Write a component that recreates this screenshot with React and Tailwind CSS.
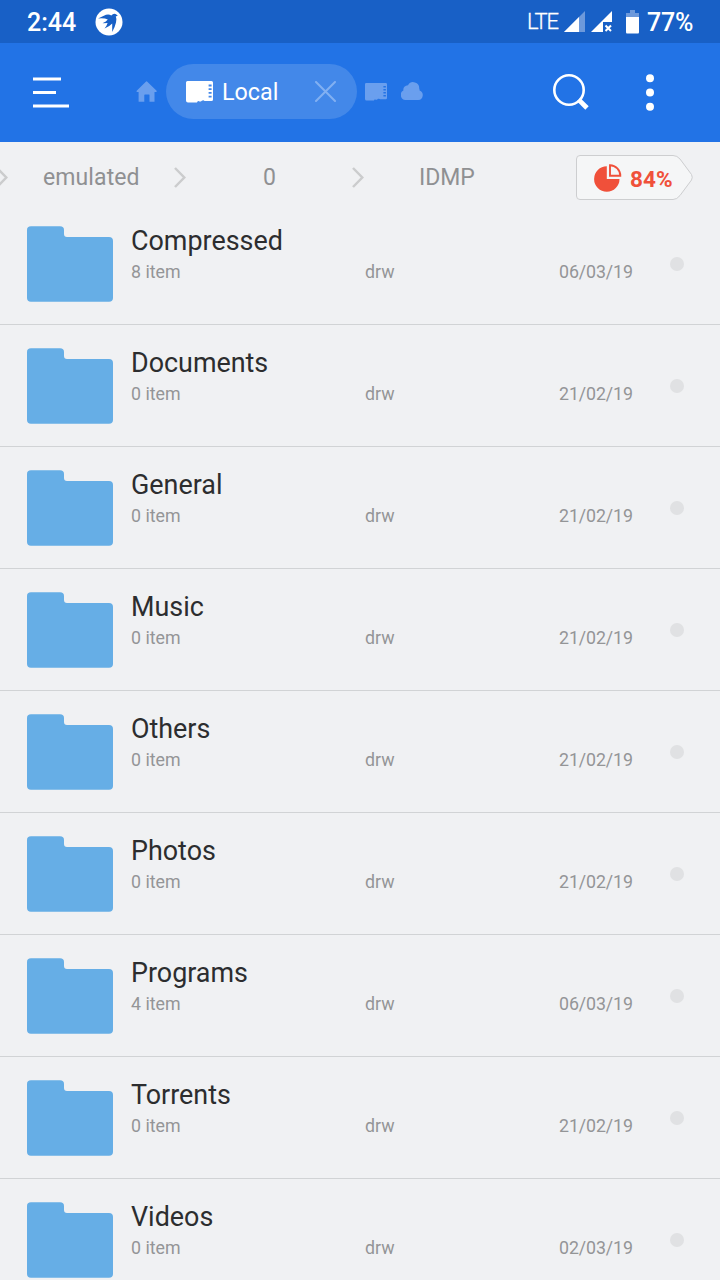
const folders = [
  ['Compressed', '8 item', '06/03/19'],
  ['Documents', '0 item', '21/02/19'],
  ['General', '0 item', '21/02/19'],
  ['Music', '0 item', '21/02/19'],
  ['Others', '0 item', '21/02/19'],
  ['Photos', '0 item', '21/02/19'],
  ['Programs', '4 item', '06/03/19'],
  ['Torrents', '0 item', '21/02/19'],
  ['Videos', '0 item', '02/03/19'],
];

function StatusBar() {
  return (
    <div className="flex h-[43px] shrink-0 items-center bg-[#1860c6] pl-[27px] text-white">
      <span className="w-[68px] text-[25px] leading-[30px] font-medium mt-[2px]">2:44</span>
      <svg className="size-7" viewBox="0 0 28 28">
        <circle cx="14" cy="14" r="13.5" fill="#fff" />
        <path
          d="M3 10.5L11 6.8Q14 5.8 16.3 7.6Q18.5 4.8 20.5 6L22.8 7.6L20.8 8.6Q22 11 21 14.5Q20 19 17.2 24L17.2 15.4Q14.5 18.4 9.5 20.4Q12 17.5 12.6 15L7.5 15.2Q11.5 13.4 12.8 11.4Q9.5 10 3 10.5Z"
          fill="#1860c6"
        />
      </svg>
      <span className="ml-[404px] w-[37px] text-[22px] leading-[28px] font-light tracking-[-1.2px] [-webkit-text-stroke:0.3px_white]">LTE</span>
      <svg className="h-[22px] w-[50px]" viewBox="0 0 50 22">
        <path d="M21 0V21H0Z" fill="#6d99db" />
        <path d="M15 6V21H0Z" fill="#fff" />
        <path d="M48 0V11H39V21H27Z" fill="#fff" />
        <path d="M41.5 14.5L47 20M47 14.5L41.5 20" stroke="#fff" strokeWidth="2" />
      </svg>
      <svg className="ml-[12px] h-6 w-[13px]" viewBox="0 0 13 24">
        <path d="M0 3H4V0H9V3H13V8H0Z" fill="#6d99db" />
        <path d="M0 7H13V22Q13 23.5 12 23.5H1Q0 23.5 0 22Z" fill="#fff" />
      </svg>
      <span className="ml-[8px] mt-[2px] text-[25px] leading-[30px] font-medium tracking-[-0.2px]">77%</span>
    </div>
  );
}

function CardIcon({ className, hole }) {
  return (
    <svg className={className} viewBox="0 0 27 22">
      <path
        d="M1.5 0H25.5Q27 0 27 1.5V18.5Q27 20 25.5 20H18.5Q18 19.2 16.5 19.4Q15 19.6 15 20.6H13.5Q12.8 19.8 11.7 20.2L11 21.5H2Q0 21.5 0 19.5V1.5Q0 0 1.5 0Z"
        fill="currentColor"
      />
      <path d="M22.6 4.5H25.6M22.6 8.2H25.6M22.6 11.9H25.6M22.6 15.6H25.6" stroke={hole} strokeWidth="1.8" />
    </svg>
  );
}

function Toolbar() {
  return (
    <div className="flex h-[99px] shrink-0 items-center bg-[#2273e6] pb-[2px] pl-[33px] text-white">
      <svg className="mt-[1px] h-[32px] w-9" viewBox="0 0 36 32">
        <path d="M0 3H28M0 16.5H23M0 30H36" stroke="#fff" strokeWidth="2.8" />
      </svg>
      <svg className="ml-[67px] h-[22px] w-[22px] text-[#6a9fee]" viewBox="0 0 22 22">
        <path
          d="M9.8 .7Q10.5 0 11.3 .7L20.6 9.7Q21.2 11 20 11H18.5V20.7H13.5V14Q13.5 13.5 13 13.5H9Q8.3 13.5 8.3 14V20.7H2.6V11H1Q0 10.7 .7 9.7Z"
          fill="currentColor"
        />
      </svg>
      <div className="ml-[8px] flex h-[55px] w-[191px] items-center rounded-full bg-[#4388e9] pl-5">
        <CardIcon className="h-[22px] w-[27px]" hole="#4388e9" />
        <span className="ml-[9px] w-[93px] text-[23.3px] leading-[28px]">Local</span>
        <svg className="h-[21px] w-[21px]" viewBox="0 0 21 21">
          <path d="M1 1L20 20M20 1L1 20" stroke="#82b0f2" strokeWidth="2" strokeLinecap="round" />
        </svg>
      </div>
      <CardIcon className="ml-[8px] h-[18px] w-[22px] text-[#6a9fee]" hole="#2273e6" />
      <svg className="ml-[14px] mt-[-1px] h-[18px] w-[22px]" viewBox="0 0 22 18">
        <path d="M5 18A5 5 0 0 1 2.4 8.6A4.6 4.6 0 0 1 7 3.2A6 6 0 0 1 18.2 6.6Q18.6 7.4 18.6 8.4A5 5 0 0 1 17.4 18Z" fill="#6a9fee" />
      </svg>
      <svg className="ml-[130px] h-[36px] w-[36px]" viewBox="0 0 36 36">
        <circle cx="16" cy="16" r="14.7" fill="none" stroke="#fff" strokeWidth="2.6" />
        <path d="M25.6 25.6L34 34" stroke="#fff" strokeWidth="4.8" />
      </svg>
      <svg className="ml-[57px] mt-[1px] h-[37px] w-2" viewBox="0 0 8 37">
        <circle cx="4" cy="4.3" r="4" fill="#fff" />
        <circle cx="4" cy="18.5" r="4" fill="#fff" />
        <circle cx="4" cy="32.8" r="4" fill="#fff" />
      </svg>
    </div>
  );
}

function Chevron({ className }) {
  return (
    <svg className={className} viewBox="0 0 12 21">
      <path d="M1 1L10.3 10.5L1 20" fill="none" stroke="#cbcccd" strokeWidth="2.5" />
    </svg>
  );
}

function Breadcrumb() {
  return (
    <div className="flex h-[61px] shrink-0 items-start text-[23px] leading-[28px] tracking-[0.1px] text-[#8f9092]">
      <Chevron className="ml-[-4px] mt-[25px] h-[21px] w-3 shrink-0" />
      <span className="ml-[35px] mt-[22px] w-[131px] shrink-0">emulated</span>
      <Chevron className="mt-[25px] h-[21px] w-3 shrink-0" />
      <span className="ml-[77px] mt-[22px] w-[89px] shrink-0">0</span>
      <Chevron className="mt-[25px] h-[21px] w-3 shrink-0" />
      <span className="ml-[55px] mt-[22px] w-[157px] shrink-0 tracking-[-0.1px]">IDMP</span>
      <div className="relative mt-[13px] flex h-[45px] w-[117px] shrink-0 items-center pl-[18px] text-[#f0503a]">
        <svg className="absolute inset-0 h-full w-full" viewBox="0 0 117 45">
          <path d="M4 .5H97Q101 .5 104 4L115.5 19.5Q117 22.5 115.5 25L104 40.5Q101 44.5 97 44.5H4Q.5 44.5 .5 41V4Q.5 .5 4 .5Z" fill="#f5f6f7" stroke="#cdced0" />
        </svg>
        <svg className="relative h-[28px] w-[28px]" viewBox="0 0 28 28">
          <path d="M12.8 2.3V15H25.5A12.7 12.7 0 1 1 12.8 2.3Z" fill="currentColor" />
          <path d="M16 1.2V11.8H26.3A10.5 10.5 0 0 0 16 1.2Z" fill="none" stroke="currentColor" strokeWidth="1.9" />
        </svg>
        <span className="relative ml-[8px] mt-[2px] text-[22.5px] font-bold">84%</span>
      </div>
    </div>
  );
}

function FolderRow({ name, count, date }) {
  return (
    <div className="flex h-[122px] shrink-0 items-start border-b border-[#d1d3d5] pl-[27px] text-[17.8px] leading-[22px] text-[#949597]">
      <svg className="mt-[23px] h-[76px] w-[86px] shrink-0" viewBox="0 0 86 76">
        <path d="M4 0.3H33Q37 0.3 37 4V8Q37 11 40 11H82Q86 11 86 15V72Q86 75.7 82 75.7H4Q0 75.7 0 72V4Q0 0.3 4 0.3Z" fill="#66aee6" />
      </svg>
      <div className="ml-[18px] mt-[22px] w-[234px] shrink-0">
        <div className="text-[26.9px] leading-[32px] text-[#2c2d2f]">{name}</div>
        <div className="mt-[4px]">{count}</div>
      </div>
      <span className="mt-[58px] w-[194px] shrink-0">drw</span>
      <span className="mt-[58px] w-[111px] shrink-0 tracking-[-0.1px]">{date}</span>
      <span className="mt-[54px] size-[14px] shrink-0 rounded-full bg-[#e0e1e3]" />
    </div>
  );
}

export default function App() {
  return (
    <div className="flex h-[1280px] w-[720px] flex-col overflow-hidden bg-[#f0f1f3] font-[Roboto,sans-serif]">
      <StatusBar />
      <Toolbar />
      <Breadcrumb />
      {folders.map(([name, count, date]) => (
        <FolderRow key={name} name={name} count={count} date={date} />
      ))}
    </div>
  );
}
